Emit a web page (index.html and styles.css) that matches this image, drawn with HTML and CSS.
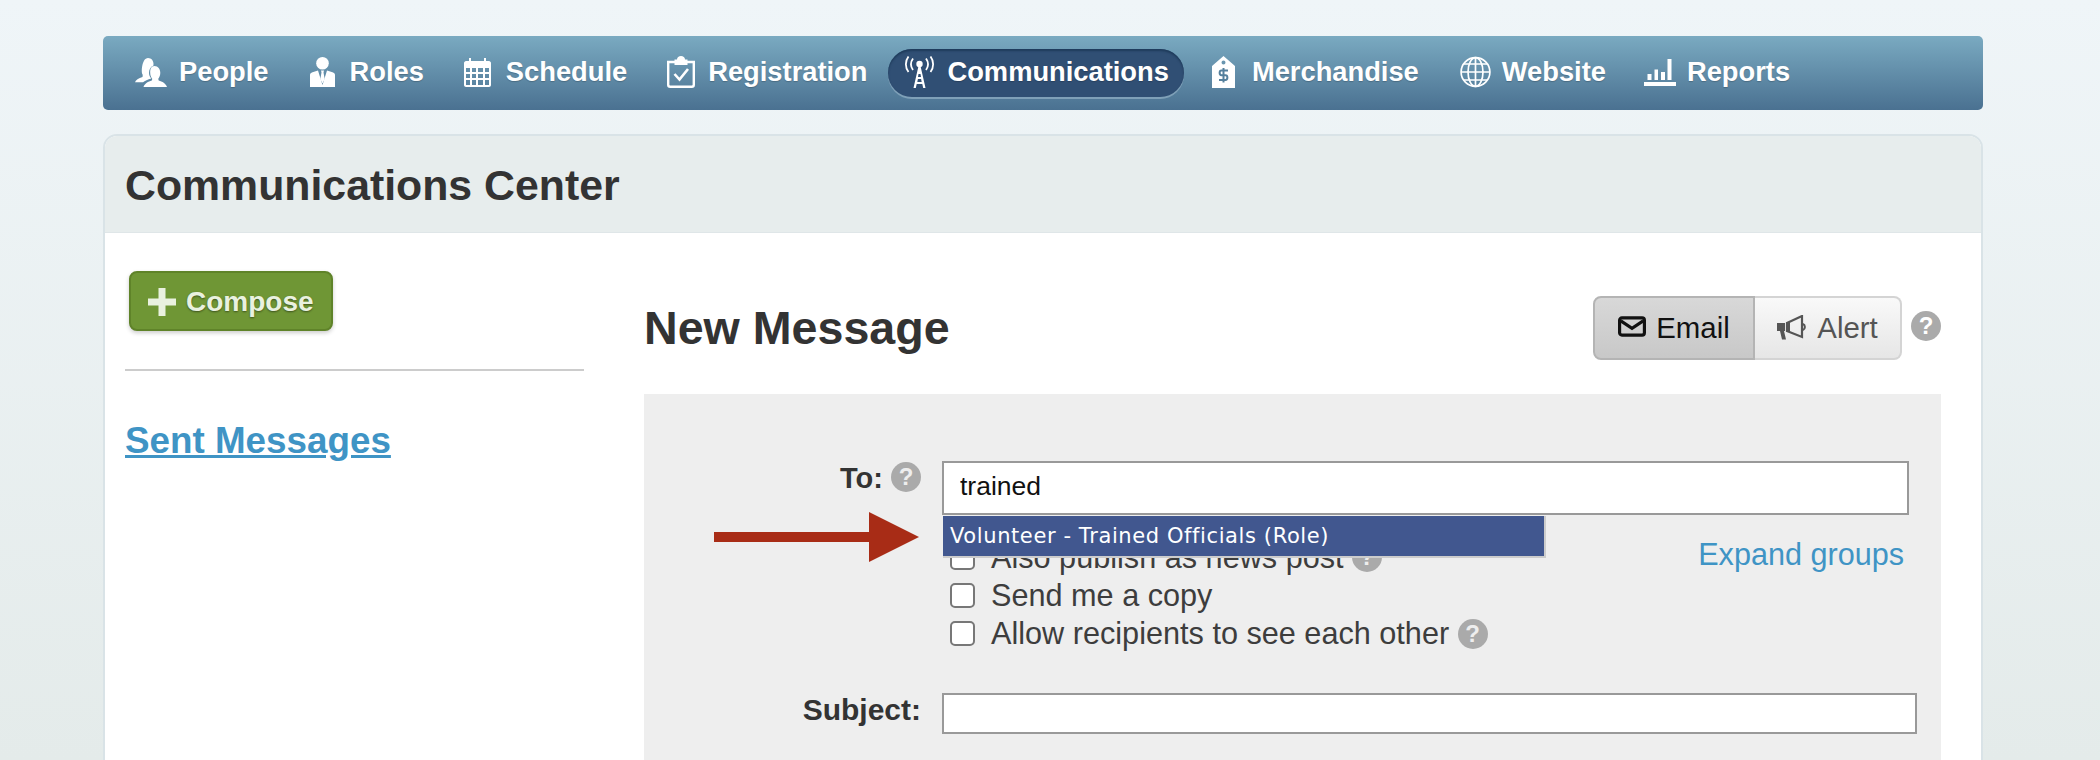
FILE: index.html
```html
<!DOCTYPE html>
<html lang="en">
<head>
<meta charset="utf-8">
<title>Communications Center</title>
<link rel="stylesheet" href="styles.css">
</head>
<body>
<nav class="nav">
  <a class="nav-item item-people"><svg class="icon w32" viewBox="0 0 32 30"><path d="M13 1c3.500 0 5.500 2.800 5.500 6 0 .6-.1 1.200-.2 1.700-2.800 1-4.300 3.800-4.300 7 0 2.300.9 4.400 2.300 5.700-3.500 1-6.500 2.300-8.300 3.900H0c.5-2.300 3.700-4 7.500-5.300.3-1 .3-2 0-2.800C6 15.500 6.800 1 13 1z"/><path d="M19.500 9c3.500 0 5.800 3 5.800 6.800 0 2.400-.8 4.500-2 6 .1.600.2 1.200.4 1.700 3.500 1 7.300 3 8.300 6.500H8.500c1-3.500 4.800-5.500 8.300-6.500.2-.5.4-1.100.4-1.700-1.300-1.500-2-3.600-2-6C15.200 12 16 9 19.500 9z"/></svg><span>People</span></a>
  <a class="nav-item item-roles"><svg class="icon w25" viewBox="0 0 25 30"><circle cx="12.500" cy="6.300" r="6.300"/><path d="M0 30V18c0-1.500 1-2.300 2.500-2.800L8 13.500 12.500 28 17 13.500l5.500 1.700c1.500.5 2.500 1.300 2.500 2.800v12z"/><path d="M11 13.500h3l-.5 2 1.200 6.500-2.200 4.500-2.200-4.500 1.200-6.500z"/></svg><span>Roles</span></a>
  <a class="nav-item item-schedule"><svg class="icon w27" viewBox="0 0 27 30"><path fill-rule="evenodd" d="M2 4h3V1h2v3h13V1h2v3h3c1 0 2 1 2 2v22c0 1-1 2-2 2H2c-1 0-2-1-2-2V6c0-1 1-2 2-2zM2 11v4h4v-4zm6 0v4h4v-4zm6 0v4h5v-4zm7 0v4h4v-4zM2 17v4h4v-4zm6 0v4h4v-4zm6 0v4h5v-4zm7 0v4h4v-4zM2 23v5h4v-5zm6 0v5h4v-5zm6 0v5h5v-5zm7 0v5h4v-5z"/></svg><span>Schedule</span></a>
  <a class="nav-item item-registration"><svg class="icon w28" viewBox="0 0 28 32"><path class="line" stroke-width="2.400" d="M8 6H1.200v22.800c0 1 1 2 2 2h21.600c1 0 2-1 2-2V6H20"/><path d="M10 3.500C10 1.500 11.800 0 14 0s4 1.500 4 3.500h2.500V9h-13V3.500z"/><path class="line" stroke-width="2.600" d="M7.500 18l5 5.500L21 13"/></svg><span>Registration</span></a>
  <a class="nav-item active item-comms"><svg class="icon w33" viewBox="0 0 33 32"><circle cx="16.500" cy="8" r="3.200"/><path d="M15.500 10h2l5 22h-2.300l-.9-4h-5.600l-.9 4h-2.300zM14.300 26h4.400l-.6-3h-3.200zM15 21h3l-.5-3h-2z"/><path class="line" stroke-width="1.800" d="M10 2.500c-2.500 3.500-2.500 8 0 11.500M23 2.500c2.500 3.500 2.500 8 0 11.500M5.500.5C2 5 2 11.500 5.500 16M27.500.5C31 5 31 11.500 27.500 16"/></svg><span>Communications</span></a>
  <a class="nav-item item-merch"><svg class="icon w23" viewBox="0 0 23 32"><path d="M11.500 0L23 10v22H0V10zM11.500 4.500a2 2 0 1 0 0 4 2 2 0 0 0 0-4z" fill-rule="evenodd"/><path class="cut" stroke-width="2" d="M16 14.500h-6.500c-2.500 0-2.500 4.700 0 4.700h4c2.500 0 2.500 4.800 0 4.800H7M11.500 12v14.500"/></svg><span>Merchandise</span></a>
  <a class="nav-item item-web"><svg class="icon w31" viewBox="0 0 31 31"><g class="line" stroke-width="1.700"><circle cx="15.500" cy="15.500" r="14.400"/><ellipse cx="15.500" cy="15.500" rx="7.500" ry="14.400"/><path d="M15.500 1v29M1.500 15.500h28M4 7.500h23M4 23.500h23"/></g></svg><span>Website</span></a>
  <a class="nav-item item-reports"><svg class="icon w32" viewBox="0 0 32 28"><path d="M0 24h32v4H0zM3.500 16h4v6h-4zM10.500 11.500h3.500V22h-3.500zM17 14h4v8h-4zM23.500 1h4v21h-4z"/></svg><span>Reports</span></a>
</nav>

<section class="card">
  <header class="card-head"><h1>Communications Center</h1></header>
  <div class="card-body">
    <aside class="side">
      <button class="compose"><svg class="plus" viewBox="0 0 28 28"><path d="M10.500 0h7v10.500H28v7H17.500V28h-7V17.500H0v-7h10.500z"/></svg>Compose</button>
      <hr class="rule">
      <a class="sent">Sent Messages</a>
    </aside>
    <main class="main">
      <div class="main-head">
        <h2>New Message</h2>
        <div class="toggle">
          <button class="seg on"><svg class="seg-icon mail" viewBox="0 0 30 22"><rect x="1.700" y="1.700" width="26.600" height="18.600" rx="2.500" fill="none" stroke="currentColor" stroke-width="3.400"/><path d="M3 5l12 8 12-8" fill="none" stroke="currentColor" stroke-width="3.400"/></svg>Email</button>
          <button class="seg off"><svg class="seg-icon horn" viewBox="0 0 30 26"><path d="M0 8h8v8h-1l2 8.500H5L3 16H0z" /><path d="M10 8l15-7v21L10 16z" fill="none" stroke="currentColor" stroke-width="2.200"/><path d="M9 7.500h4v9H9z"/><path d="M26 9c2.500 1 2.500 5 0 6" fill="none" stroke="currentColor" stroke-width="2"/></svg>Alert</button>
        </div>
        <span class="help help-top">?</span>
      </div>
      <div class="panel">
        <div class="row to-row">
          <label class="lbl">To: <span class="help">?</span></label>
          <div class="to-field">
            <input class="txt to-input" type="text" value="trained">
            <div class="suggest">Volunteer - Trained Officials (Role)</div>
            <svg class="arrow" viewBox="0 0 205 50"><path d="M0 20h155V0l50 25-50 25V30H0z"/></svg>
          </div>
        </div>
        <div class="opts">
          <div class="expand-row"><a class="expand">Expand groups</a></div>
          <label class="opt"><span class="box"></span>Also publish as news post <span class="help">?</span></label>
          <label class="opt"><span class="box"></span>Send me a copy</label>
          <label class="opt"><span class="box"></span>Allow recipients to see each other <span class="help">?</span></label>
        </div>
        <div class="row subj-row">
          <label class="lbl">Subject:</label>
          <input class="txt subj-input" type="text">
        </div>
      </div>
    </main>
  </div>
</section>
</body>
</html>
```

FILE: styles.css
```css
* { box-sizing: border-box; }
html, body { height: 760px; overflow: hidden; }
body {
  margin: 0;
  padding: 36px 117px 0 103px;
  font-family: "Liberation Sans", Arial, sans-serif;
  color: #333;
  background: linear-gradient(#eff5f8, #e4ebea);
}
.nav {
  height: 74px;
  display: flex;
  align-items: center;
  padding-left: 17px;
  gap: 10px;
  border-radius: 5px;
  background: linear-gradient(#7aaac1, #4a7191);
}
.nav-item {
  height: 48px;
  display: flex;
  align-items: center;
  gap: 11px;
  padding: 0 15px 3px;
  color: #fff;
  font-size: 27.300px;
  font-weight: 700;
  text-shadow: 0 1px 1px rgba(0,0,0,.2);
}
.item-people { gap: 12px; }
.item-roles { gap: 15px; margin-left: 1px; }
.item-schedule { gap: 15px; }
.item-registration { gap: 13px; }
.item-comms { margin-left: -4px; }
.item-merch { gap: 17px; margin-left: 3px; }
.item-web { margin-left: 1px; }
.item-reports { margin-left: -2px; }
.nav-item.active {
  background: #304f74;
  border-radius: 24px;
  box-shadow: inset 0 2px 2px #1f3c5c, 0 2px 0 #7fa0b8;
}
.icon { height: 32px; fill: #fff; flex: none; }
.item-roles .icon { height: 30px; }
.w23 { width: 23px; }
.w25 { width: 25px; }
.w27 { width: 27px; }
.w28 { width: 28px; }
.w31 { width: 31px; }
.w32 { width: 32px; }
.w33 { width: 33px; }
.line { fill: none; stroke: #fff; }
.cut { fill: none; stroke: #55809d; }

.card {
  margin-top: 24px;
  height: 800px;
  background: #fff;
  border: 2px solid #d9e3e7;
  border-radius: 14px;
}
.card-head {
  height: 97px;
  padding: 2px 0 0 20px;
  display: flex;
  align-items: center;
  background: #e7eded;
  border-bottom: 1px solid #dfe6e8;
  border-radius: 12px 12px 0 0;
}
h1 { margin: 0; font-size: 42.800px; font-weight: 700; }
.card-body { display: flex; padding-left: 20px; }
.side { width: 459px; padding-top: 38px; }
.compose {
  display: flex;
  align-items: center;
  gap: 10px;
  margin-left: 4px;
  width: 204px;
  height: 60px;
  padding: 1px 0 0 17px;
  font: 700 28px "Liberation Sans", Arial, sans-serif;
  color: #e9f1df;
  text-shadow: 0 1px 2px rgba(0,0,0,.45);
  background: #6f9635;
  border: 2px solid #5f8329;
  border-radius: 8px;
  box-shadow: 0 2px 4px rgba(0,0,0,.2);
}
.plus { width: 28px; height: 28px; fill: #e9f1df; }
.rule { margin: 38px 0 0; border: 0; height: 2px; background: #ccc; }
.sent {
  display: block;
  margin-top: 49px;
  font-size: 36.800px;
  font-weight: 700;
  color: #3f94c5;
  text-decoration: underline;
}
.main { width: 1297px; margin-left: 60px; }
.main-head {
  height: 161px;
  padding-top: 63px;
  display: flex;
  align-items: flex-start;
}
h2 { margin: 6px 0 0; flex: 1; font-size: 46.600px; font-weight: 700; line-height: 52px; }
.toggle { display: flex; height: 64px; }
.seg {
  display: flex;
  align-items: center;
  justify-content: center;
  gap: 10px;
  font: 29.400px "Liberation Sans", Arial, sans-serif;
  padding: 0;
}
.seg.on {
  width: 162px;
  color: #111;
  background: linear-gradient(#d8d8d8, #c8c8c8);
  border: 2px solid #b4b4b4;
  border-radius: 8px 0 0 8px;
}
.seg.off {
  width: 147px;
  color: #555;
  background: linear-gradient(#f9f9f9, #e6e6e6);
  border: 2px solid #d4d4d4;
  border-left: 0;
  border-radius: 0 8px 8px 0;
}
.seg-icon { fill: currentColor; }
.mail { width: 28px; height: 21px; margin-bottom: 4px; }
.horn { width: 30px; height: 26px; }
.help {
  display: inline-flex;
  align-items: center;
  justify-content: center;
  width: 30px;
  height: 30px;
  border-radius: 50%;
  background: #aaa;
  color: #eee;
  font: 700 24px "Liberation Sans", Arial, sans-serif;
}
.help-top { margin: 15px 0 0 9px; color: #fff; }
.panel { height: 500px; background: #eee; padding-top: 67px; }
.row { display: flex; }
.lbl {
  width: 277px;
  margin-right: 21px;
  display: flex;
  justify-content: flex-end;
  align-items: flex-start;
  gap: 7px;
  font-size: 30px;
  font-weight: 700;
  flex: none;
}
.to-row .lbl { font-size: 29px; gap: 8px; padding-top: 1px; }
.txt {
  display: block;
  border: 2px solid #999;
  background: #fff;
  padding: 0 16px;
  font: 26.500px "Liberation Sans", Arial, sans-serif;
  color: #111;
  border-radius: 0;
  outline: 0;
}
.to-field { position: relative; }
.to-input { width: 967px; height: 54px; padding-bottom: 3px; }
.suggest {
  position: absolute;
  z-index: 1;
  left: 1px;
  top: 55px;
  width: 603px;
  height: 42px;
  padding-left: 7px;
  background: #41578f;
  border-right: 2px solid #ccc;
  border-bottom: 2px solid #ccc;
  color: #fff;
  font: 21px/40px "DejaVu Sans", Verdana, sans-serif;
  letter-spacing: .6px;
  white-space: nowrap;
}
.arrow { position: absolute; left: -228px; top: 51px; width: 205px; height: 50px; fill: #a82c16; }
.opts { margin-left: 307px; }
.expand-row { display: flex; justify-content: flex-end; padding-right: 37px; height: 23px; padding-top: 21px; }
.expand { font-size: 30.600px; color: #3f94c5; line-height: 36px; white-space: nowrap; }
.opt { display: flex; align-items: center; height: 38.400px; font-size: 30.650px; color: #3d3d3d; white-space: pre; }
.box {
  width: 25px;
  height: 25px;
  margin: 0 15px 0 -1px;
  background: #fff;
  border: 2px solid #777;
  border-radius: 5px;
  flex: none;
}
.opt .box { margin-right: 16px; }
.subj-row { margin-top: 40px; }
.subj-input { width: 975px; height: 41px; }
```
